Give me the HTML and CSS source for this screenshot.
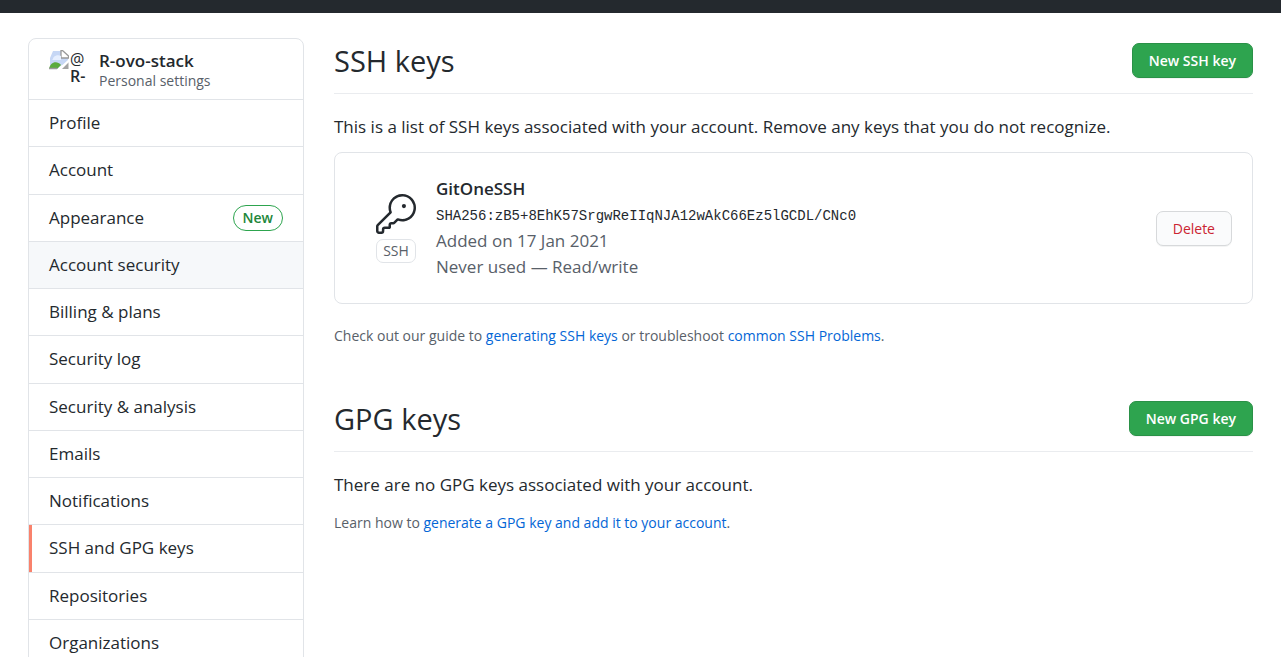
FILE: index.html
```html
<!DOCTYPE html>
<html lang="en">
<head>
<meta charset="utf-8">
<meta name="viewport" content="width=device-width, initial-scale=1">
<title>SSH and GPG keys</title>
<link rel="stylesheet" href="styles.css">
</head>
<body>
<header class="topbar"></header>
<div class="page">
  <nav class="menu" aria-label="Personal settings">
    <div class="account">
      <div class="avatar">
        <svg class="avatar-icon" viewBox="0 0 20 20" aria-hidden="true">
          <path d="M4 1h9l6 6v8h-6l-5 4H1V8z" fill="#c6d7f5"/>
          <path d="M12 .5h1.500L19.500 6v2H12z" fill="#fff" stroke="#999" stroke-width="1.300"/>
          <path d="M4 9c0-3 5-5 8-3v4H3z" fill="#e6efff"/>
          <path d="M0 19c1-7 8-9 12-4l-4 4H0z" fill="#5aab3c"/>
          <path d="M11 19l8.500-7v7z" fill="#a3a3a3"/>
          <path d="M8 20l12-11v3l-8 8z" fill="#fff"/>
          <path d="M0 18.500h8" stroke="#999" stroke-width="1.300"/>
        </svg>
        <div class="avatar-alt">
          <span class="at">@</span>
          <span>R-</span>
        </div>
      </div>
      <div class="account-text">
        <strong class="account-name">R-ovo-stack</strong>
        <span class="account-sub">Personal settings</span>
      </div>
    </div>
    <a class="item" href="#">Profile</a>
    <a class="item" href="#">Account</a>
    <a class="item" href="#">Appearance <span class="badge">New</span></a>
    <a class="item hovered" href="#">Account security</a>
    <a class="item" href="#">Billing &amp; plans</a>
    <a class="item" href="#">Security log</a>
    <a class="item" href="#">Security &amp; analysis</a>
    <a class="item" href="#">Emails</a>
    <a class="item" href="#">Notifications</a>
    <a class="item selected" href="#" aria-current="page">SSH and GPG keys</a>
    <a class="item" href="#">Repositories</a>
    <a class="item" href="#">Organizations</a>
  </nav>
  <main class="content">
    <section class="section">
      <div class="subhead">
        <h2 class="heading">SSH keys</h2>
        <button class="btn primary" type="button">New SSH key</button>
      </div>
      <p class="lead">This is a list of SSH keys associated with your account. Remove any keys that you do not recognize.</p>
      <div class="key-card">
        <div class="key-type">
          <svg class="key-icon" viewBox="0 0 24 24" aria-hidden="true">
            <path d="M16.750 8.500a1.250 1.250 0 100-2.500 1.250 1.250 0 000 2.500z"/>
            <path fill-rule="evenodd" d="M15.750 0a8.250 8.250 0 00-7.851 10.790L.513 18.178A1.750 1.750 0 000 19.414v2.836C0 23.217.784 24 1.750 24h1.500A1.750 1.750 0 005 22.250v-1a.250.250 0 01.250-.250h2.735a.750.750 0 00.545-.220l.214-.213A.875.875 0 009 19.948V18.500a.250.250 0 01.250-.250h1.086c.464 0 .910-.184 1.237-.513l1.636-1.636A8.250 8.250 0 1015.750 0zM9 8.250a6.750 6.750 0 114.288 6.287.750.750 0 00-.804.168l-1.971 1.972a.250.250 0 01-.177.073H9.250A1.750 1.750 0 007.500 18.500v1H5.250a1.750 1.750 0 00-1.750 1.750v1a.250.250 0 01-.250.250h-1.500a.250.250 0 01-.250-.250v-2.836a.250.250 0 01.073-.177l7.722-7.721a.750.750 0 00.168-.804A6.730 6.730 0 019 8.250z"/>
          </svg>
          <span class="tag">SSH</span>
        </div>
        <div class="key-info">
          <strong class="key-name">GitOneSSH</strong>
          <code class="fingerprint">SHA256:zB5+8EhK57SrgwReIIqNJA12wAkC66Ez5lGCDL/CNc0</code>
          <span>Added on 17 Jan 2021</span>
          <span>Never used — Read/write</span>
        </div>
        <button class="btn danger" type="button">Delete</button>
      </div>
      <p class="note ssh-note">Check out our guide to <a href="#">generating SSH keys</a> or troubleshoot <a href="#">common SSH Problems</a>.</p>
    </section>
    <section class="section">
      <div class="subhead">
        <h2 class="heading">GPG keys</h2>
        <button class="btn primary" type="button">New GPG key</button>
      </div>
      <p class="lead">There are no GPG keys associated with your account.</p>
      <p class="note">Learn how to <a href="#">generate a GPG key and add it to your account</a>.</p>
    </section>
  </main>
</div>
</body>
</html>
```

FILE: styles.css
```css
* { box-sizing: border-box; }

body {
  margin: 0;
  background: #fff;
  color: #24292e;
  font: 17px/26px "Open Sans", "Noto Sans", sans-serif;
}

a { color: #0366d6; text-decoration: none; }

.topbar { height: 13px; background: #24292e; }

.page {
  display: flex;
  align-items: flex-start;
  gap: 30px;
  padding: 25px 28px 0;
}

.menu {
  flex: 0 0 276px;
  border: 1px solid #e1e4e8;
  border-radius: 8px;
  overflow: hidden;
}

.account {
  display: flex;
  gap: 10px;
  padding: 11px 20px 10px;
  border-bottom: 1px solid #e1e4e8;
}

.avatar {
  display: flex;
  flex: 0 0 40px;
  gap: 1px;
}

.avatar-alt {
  display: flex;
  flex-direction: column;
  padding-top: 1px;
  font-size: 16px;
  font-weight: 600;
  line-height: 17px;
}

.at { font-weight: 400; }

.avatar-icon { flex: none; width: 20px; height: 20px; }

.account-text { display: flex; flex-direction: column; }

.account-name { font-size: 17px; font-weight: 600; line-height: 22px; }

.account-sub { color: #586069; font-size: 14px; line-height: 17px; }

.item {
  display: flex;
  justify-content: space-between;
  align-items: center;
  padding: 10px 20px;
  border-bottom: 1px solid #e1e4e8;
  color: #24292e;
}

.item:nth-child(4n + 3) { padding-bottom: 11px; }

.hovered { background: #f6f8fa; }

.selected { box-shadow: inset 3px 0 #f9826c; }

.badge {
  padding: 0 9px;
  border: 1px solid #2da44e;
  border-radius: 13px;
  color: #22863a;
  font-size: 14px;
  font-weight: 600;
  line-height: 24px;
}

.content { flex: 1; min-width: 0; }

.section { margin-bottom: 49px; }

.subhead {
  display: flex;
  justify-content: space-between;
  align-items: center;
  padding: 5px 0 15px;
  margin-bottom: 20px;
  border-bottom: 1px solid #eaecef;
}

.heading { margin: 0; font-size: 29px; font-weight: 400; line-height: 35px; }

.btn {
  padding: 0 16px;
  border: 1px solid #d7d9db;
  border-radius: 7px;
  background: #fafbfc;
  font-family: inherit;
  font-size: 14px;
  line-height: 33px;
  white-space: nowrap;
  box-shadow: 0 1px 0 rgba(27, 31, 35, 0.05);
}

.primary { border-color: #2a9147; background: #2ea44f; color: #fff; font-weight: 600; }

.danger { color: #cb2431; }

.lead { margin: 0 0 12px; }

.key-card {
  display: flex;
  align-items: center;
  gap: 20px;
  padding: 20px;
  border: 1px solid #e1e4e8;
  border-radius: 8px;
}

.key-type {
  display: flex;
  flex-direction: column;
  align-items: center;
  gap: 5px;
  margin-left: 21px;
}

.key-icon { width: 40px; height: 40px; fill: #24292e; }

.tag {
  padding: 0 6px;
  border: 1px solid #e1e4e8;
  border-radius: 7px;
  color: #586069;
  font-size: 14px;
  line-height: 22px;
}

.key-info {
  display: flex;
  flex: 1;
  flex-direction: column;
  min-width: 0;
  padding: 3px 0;
  color: #586069;
}

.key-name { color: #24292e; font-size: 17px; font-weight: 600; }

.fingerprint {
  padding-top: 2px;
  color: #24292e;
  font: 14px/24px "Liberation Mono", monospace;
  overflow-wrap: anywhere;
}

.note { margin: 14px 0 0; color: #586069; font-size: 14px; line-height: 22px; }

.ssh-note { margin-top: 21px; }
```
